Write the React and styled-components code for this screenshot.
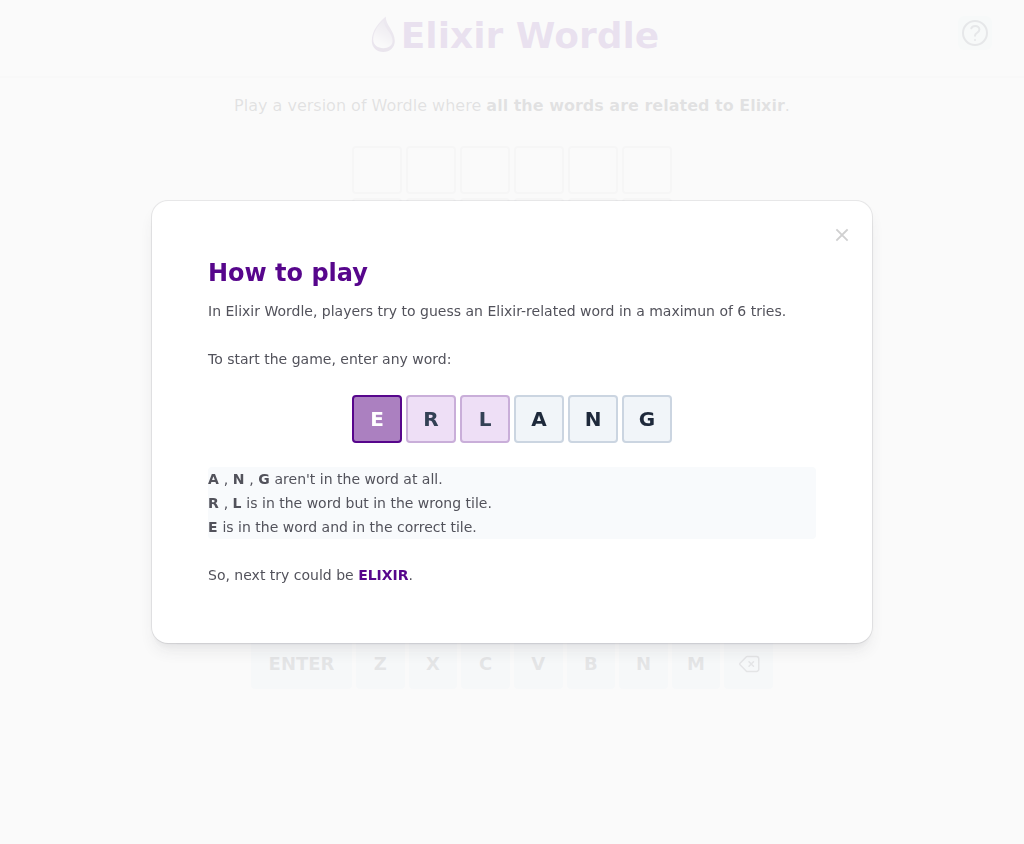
import React from "react";
import styled, { createGlobalStyle } from "styled-components";

const GlobalStyle = createGlobalStyle`
  *, *::before, *::after { box-sizing: border-box; }
  body {
    margin: 0;
    background: #ffffff;
    color: #18181b;
    font-family: "DejaVu Sans", sans-serif;
    font-size: 16px;
    line-height: 24px;
  }
  h1, h2, p { margin: 0; }
  button { font: inherit; border: 0; padding: 0; cursor: pointer; }
`;

const Header = styled.header`
  display: grid;
  grid-template-columns: 1fr auto 1fr;
  align-items: start;
  padding: 16px 32px 20px;
  border-bottom: 2px solid #e4e4e7;
`;

const Brand = styled.h1`
  grid-column: 2;
  display: flex;
  align-items: flex-start;
  font-size: 36px;
  line-height: 40px;
  font-weight: 700;
  color: #57068c;
`;

const HelpButton = styled.button`
  grid-column: 3;
  justify-self: end;
  display: flex;
  align-items: center;
  justify-content: center;
  width: 34px;
  height: 34px;
  border-radius: 6px;
  background: #dcf4ee;
  color: #334155;
`;

const Main = styled.main`
  display: flex;
  flex-direction: column;
  align-items: center;
  padding: 16px 16px 32px;
`;

const Intro = styled.p`
  color: #09090b;
  text-align: center;
`;

const Board = styled.div`
  display: grid;
  gap: 4px;
  margin: 28px 0 77px;
`;

const TileRow = styled.div`
  display: flex;
  justify-content: center;
  gap: 4px;
`;

const tileStyles = {
  empty: { bg: "transparent", border: "#d4d4d8", text: "#1e293b" },
  correct: { bg: "#ab80c0", border: "#57068c", text: "#ffffff" },
  present: { bg: "#eedff6", border: "#c9aed9", text: "#334155" },
  absent: { bg: "#f1f5f9", border: "#cbd5e1", text: "#1e293b" },
};

const Tile = styled.span`
  display: flex;
  align-items: center;
  justify-content: center;
  width: 50px;
  height: 48px;
  border: 2px solid ${(p) => tileStyles[p.$state].border};
  border-radius: 4px;
  background: ${(p) => tileStyles[p.$state].bg};
  color: ${(p) => tileStyles[p.$state].text};
  font-size: 20px;
  line-height: 28px;
  font-weight: 700;
`;

const Keyboard = styled.div`
  display: grid;
  gap: 4px;
  width: 100%;
  max-width: 522px;
`;

const KeyRow = styled.div`
  display: flex;
  justify-content: center;
  gap: 4px;
`;

const Key = styled.button`
  display: flex;
  align-items: center;
  justify-content: center;
  flex: ${(p) => (p.$wide ? "0 0 101px" : "1 1 0")};
  max-width: ${(p) => (p.$wide ? "none" : "49px")};
  height: 50px;
  border-radius: 4px;
  background: #d8e4f4;
  color: #1e293b;
  font-size: 18px;
  line-height: 28px;
  font-weight: 700;
`;

const Backdrop = styled.div`
  position: fixed;
  inset: 0;
  background: rgba(250, 250, 250, 0.9);
`;

const DialogLayer = styled.div`
  position: fixed;
  inset: 0;
  display: flex;
  align-items: center;
  justify-content: center;
  padding: 24px;
  overflow-y: auto;
`;

const Dialog = styled.section`
  display: grid;
  gap: 24px;
  position: relative;
  width: 100%;
  max-width: 720px;
  padding: 56px;
  border-radius: 16px;
  background: #ffffff;
  box-shadow:
    0 0 0 1px rgba(63, 63, 70, 0.1),
    0 10px 15px -3px rgba(63, 63, 70, 0.1),
    0 4px 6px -4px rgba(63, 63, 70, 0.1);
  color: #52525b;
  font-size: 14px;
  line-height: 24px;
`;

const CloseButton = styled.button`
  position: absolute;
  top: 24px;
  right: 20px;
  display: flex;
  background: transparent;
  color: #18181b;
  opacity: 0.2;
`;

const DialogTitle = styled.h2`
  margin-bottom: 10px;
  color: #57068c;
  font-size: 24px;
  line-height: 32px;
  font-weight: 700;
`;

const Hints = styled.div`
  border-radius: 4px;
  background: #f8fafc;
`;

const Answer = styled.strong`
  color: #57068c;
`;

function Drop() {
  return (
    <svg width="36" height="36" viewBox="0 0 36 36" aria-hidden="true">
      <defs>
        <linearGradient id="drop-edge" x1="0" y1="0" x2="0" y2="1">
          <stop offset="0" stopColor="#7d5a9c" />
          <stop offset="1" stopColor="#57297c" />
        </linearGradient>
        <linearGradient id="drop-core" x1="0.75" y1="0.1" x2="0.4" y2="1">
          <stop offset="0" stopColor="#8468a0" />
          <stop offset="0.45" stopColor="#b9a8c9" />
          <stop offset="0.8" stopColor="#f0eaf5" />
          <stop offset="1" stopColor="#ffffff" />
        </linearGradient>
      </defs>
      <path d="M20.800 0.500C20.400 9 29.800 14.500 29.800 25C29.800 31.500 24.800 36 18.300 36S6.800 31.500 6.800 25C6.800 14.500 14 6 20.800 0.500Z" fill="url(#drop-edge)" />
      <path d="M18.500 4.500C19 12.500 27.600 17 27.600 25C27.600 29.500 23.500 32.200 18.300 32.200S8.200 29 8.200 23.500C8.200 16 13 9 18.500 4.500Z" fill="url(#drop-core)" />
    </svg>
  );
}

function HelpIcon() {
  return (
    <svg width="32" height="32" viewBox="0 0 24 24" fill="none" stroke="currentColor" strokeWidth="1.5" strokeLinecap="round" strokeLinejoin="round" aria-hidden="true">
      <path d="M9.200 8.500C9.600 7.400 10.700 6.700 12.200 6.700c1.800 0 3.100 1.200 3.100 2.700 0 1.300-.9 2-1.900 2.600C12.400 12.600 12 13.100 12 14.100M12 17.200h.01M21 12a9 9 0 1 1-18 0 9 9 0 0 1 18 0z" />
    </svg>
  );
}

function BackspaceIcon() {
  return (
    <svg width="24" height="24" viewBox="0 0 24 24" fill="none" stroke="currentColor" strokeWidth="1.5" strokeLinecap="round" strokeLinejoin="round" aria-hidden="true">
      <path d="M12 9.750 14.250 12m0 0 2.250 2.250M14.250 12l2.250-2.250M14.250 12 12 14.250m-2.580 4.920-6.374-6.375a1.125 1.125 0 0 1 0-1.590L9.420 4.830c.21-.211.497-.33.795-.33H19.500a2.250 2.250 0 0 1 2.250 2.250v10.500a2.250 2.250 0 0 1-2.250 2.250h-9.284c-.298 0-.585-.119-.796-.33Z" />
    </svg>
  );
}

function CloseIcon() {
  return (
    <svg width="20" height="20" viewBox="0 0 20 20" fill="none" stroke="currentColor" strokeWidth="1.8" strokeLinecap="square" aria-hidden="true">
      <path d="M5 15 15 5M5 5l10 10" />
    </svg>
  );
}

const example = [
  ["E", "correct"],
  ["R", "present"],
  ["L", "present"],
  ["A", "absent"],
  ["N", "absent"],
  ["G", "absent"],
];

const letterRows = ["QWERTYUIOP", "ASDFGHJKL"];

export default function App() {
  return (
    <>
      <GlobalStyle />
      <Header>
        <Brand>
          <Drop />
          Elixir Wordle
        </Brand>
        <HelpButton type="button" aria-label="How to play">
          <HelpIcon />
        </HelpButton>
      </Header>
      <Main>
        <Intro>
          Play a version of Wordle where <strong>all the words are related to Elixir</strong>.
        </Intro>
        <Board>
          {Array.from({ length: 6 }, (_, row) => (
            <TileRow key={row}>
              {Array.from({ length: 6 }, (_, col) => (
                <Tile key={col} $state="empty" />
              ))}
            </TileRow>
          ))}
        </Board>
        <Keyboard>
          {letterRows.map((letters) => (
            <KeyRow key={letters}>
              {[...letters].map((letter) => (
                <Key type="button" key={letter}>{letter}</Key>
              ))}
            </KeyRow>
          ))}
          <KeyRow>
            <Key type="button" $wide>ENTER</Key>
            {[..."ZXCVBNM"].map((letter) => (
              <Key type="button" key={letter}>{letter}</Key>
            ))}
            <Key type="button" aria-label="Backspace">
              <BackspaceIcon />
            </Key>
          </KeyRow>
        </Keyboard>
      </Main>
      <Backdrop />
      <DialogLayer>
        <Dialog role="dialog" aria-modal="true" aria-labelledby="how-to-play">
          <CloseButton type="button" aria-label="Close">
            <CloseIcon />
          </CloseButton>
          <div>
            <DialogTitle id="how-to-play">How to play</DialogTitle>
            <p>In Elixir Wordle, players try to guess an Elixir-related word in a maximun of 6 tries.</p>
          </div>
          <p>To start the game, enter any word:</p>
          <TileRow>
            {example.map(([letter, state]) => (
              <Tile key={letter} $state={state}>{letter}</Tile>
            ))}
          </TileRow>
          <Hints>
            <p><strong>A </strong>, <strong>N </strong>, <strong>G </strong>aren't in the word at all.</p>
            <p><strong>R </strong>, <strong>L </strong>is in the word but in the wrong tile.</p>
            <p><strong>E </strong>is in the word and in the correct tile.</p>
          </Hints>
          <p>So, next try could be <Answer>ELIXIR</Answer>.</p>
        </Dialog>
      </DialogLayer>
    </>
  );
}
